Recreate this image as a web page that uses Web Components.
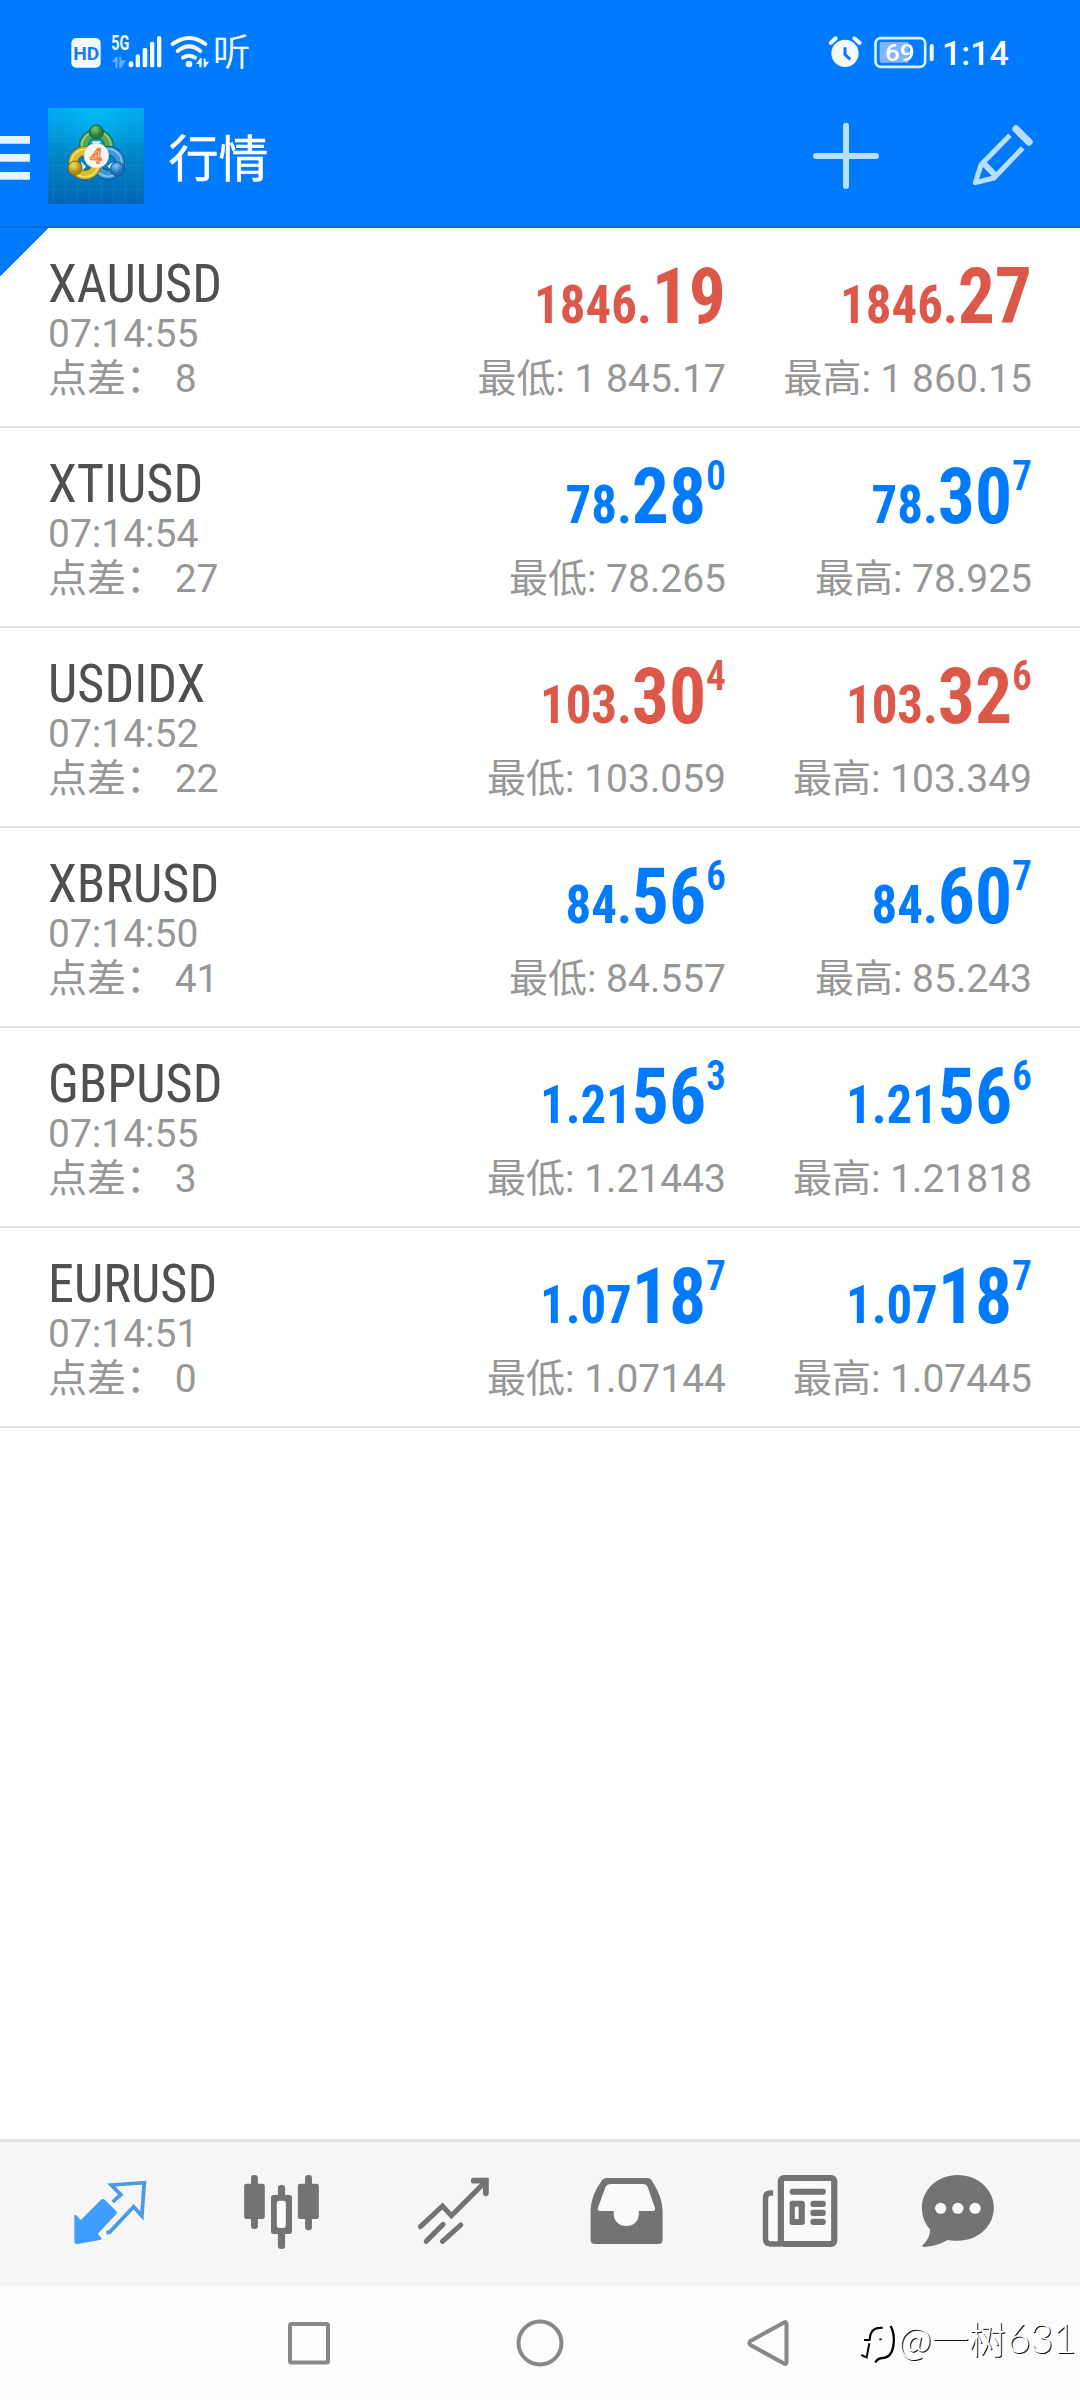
<!DOCTYPE html>
<html lang="zh-CN">
<head>
<meta charset="utf-8">
<title>行情</title>
<style>
html,body{margin:0;padding:0;background:#fff}
body{width:1080px;height:2400px;overflow:hidden;font-family:Roboto,"Noto Sans CJK SC",sans-serif}
</style>
</head>
<body>
<quotes-app></quotes-app>
<script>
const define = (name, html, after) => customElements.define(name, class extends HTMLElement {
  connectedCallback() {
    if (this.shadowRoot) return;
    const root = this.attachShadow({ mode: 'open' });
    root.innerHTML = typeof html === 'function' ? html(this) : html;
    if (after) after(root, this);
  }
});

define('status-bar', `
<style>
:host{display:flex;height:96px;color:#fff}
svg{display:block;height:96px;flex:none}
.t{font:300 37px/96px "Noto Sans CJK SC",sans-serif;margin-left:-1px;height:96px;position:relative;top:2px;-webkit-text-stroke:.6px #fff}
.sp{flex:1}
.clock{font:500 34px/96px Roboto,sans-serif;width:136px;position:relative;top:5px}
text{font-family:Roboto,sans-serif}
</style>
<svg width="214" viewBox="0 0 642 288" fill="#f3faff">
  <rect x="214" y="114" width="88" height="89" rx="15"/>
  <text x="220" y="179" font-size="57" font-weight="700" fill="#1c7bea" textLength="78" lengthAdjust="spacingAndGlyphs">HD</text>
  <text x="334" y="151" font-size="58" font-weight="700" textLength="54" lengthAdjust="spacingAndGlyphs">5G</text>
  <g opacity=".4"><path d="M336 186L347 171H353V203H346V186ZM358 171H364V181H378L365 203H358Z"/></g>
  <rect x="386" y="184" width="14" height="18" rx="6"/><rect x="407" y="163" width="13" height="39" rx="5"/><rect x="428" y="144" width="14" height="58" rx="5"/><rect x="450" y="125" width="13" height="77" rx="5"/><rect x="471" y="108" width="13" height="94" rx="5"/>
  <g fill="none" stroke="#f3faff" stroke-width="12" stroke-linecap="round"><path d="M518 132Q567 96 616 132M533 153Q567 125 601 153M549 173Q567 161 585 173"/></g>
  <circle cx="567" cy="192" r="10"/>
  <path d="M588 192L600 175H605V202H598V192ZM611 176H617V185H627L616 202H611Z"/>
</svg>
<span class="t">听</span><span class="sp"></span>
<svg width="124" viewBox="318 0 372 288" fill="#f3faff">
  <circle cx="375" cy="160" r="41"/>
  <path d="M375 142V164L391 178" fill="none" stroke="#0878f5" stroke-width="9"/>
  <path d="M332 129L347 115M403 115L419 129" stroke="#f3faff" stroke-width="12" stroke-linecap="round"/>
  <rect x="466.500" y="114.500" width="149" height="86" rx="16" fill="none" stroke="#d9edff" stroke-width="8"/>
  <rect x="479" y="126" width="87" height="62" rx="5" fill="#82b5ff"/>
  <text x="495" y="183" font-size="74" font-weight="500" textLength="88" lengthAdjust="spacingAndGlyphs" fill="#fff">69</text>
  <rect x="629" y="132" width="12" height="52" rx="6"/>
</svg>
<span class="clock" style="margin-left:-8px;margin-right:2px">1:14</span>`);

define('app-logo', `
<style>:host{display:block;width:96px;height:96px}svg{display:block}text{font-family:Roboto,sans-serif}</style>
<svg width="96" height="96" viewBox="144 324 288 288">
<defs>
<linearGradient id="s" x2="0" y2="1"><stop stop-color="#00a8ec"/><stop offset=".5" stop-color="#0085c6"/><stop offset="1" stop-color="#0065b4"/></linearGradient>
<radialGradient id="h" cx=".5" cy="0" r=".6"><stop stop-color="#00c8ff" stop-opacity=".7"/><stop offset="1" stop-color="#00b4ff" stop-opacity="0"/></radialGradient>
<radialGradient id="g" cx=".4" cy=".3"><stop stop-color="#7fc97a"/><stop offset="1" stop-color="#1f8038"/></radialGradient>
<radialGradient id="y" cx=".4" cy=".3"><stop stop-color="#f4e467"/><stop offset="1" stop-color="#b08d16"/></radialGradient>
<radialGradient id="b" cx=".4" cy=".3"><stop stop-color="#7cc8f4"/><stop offset="1" stop-color="#1c6fb8"/></radialGradient>
</defs>
<rect x="144" y="324" width="288" height="288" fill="url(#s)"/><rect x="144" y="324" width="288" height="288" fill="url(#h)"/>
<path d="M160 324V612M196 324V612M232 324V612M268 324V612M304 324V612M340 324V612M376 324V612M412 324V612M144 352H432M144 388H432M144 424H432M144 460H432M144 496H432M144 532H432M144 568H432" stroke="#4cc4ee" stroke-opacity=".2" stroke-width="2"/>
<circle cx="289" cy="439" r="38" fill="none" stroke="#17602f" stroke-width="29"/>
<circle cx="289" cy="439" r="38" fill="none" stroke="#57a659" stroke-width="24"/>
<circle cx="289" cy="439" r="44" fill="none" stroke="#a3d79a" stroke-width="4"/>
<circle cx="324" cy="488" r="36" fill="none" stroke="#0d4c87" stroke-width="29"/>
<circle cx="324" cy="488" r="36" fill="none" stroke="#3c97d6" stroke-width="24"/>
<circle cx="324" cy="488" r="41" fill="none" stroke="#8bcdf2" stroke-width="4"/>
<circle cx="255" cy="489" r="36" fill="none" stroke="#7d6c17" stroke-width="29"/>
<circle cx="255" cy="489" r="36" fill="none" stroke="#d8bd2c" stroke-width="24"/>
<circle cx="255" cy="489" r="41" fill="none" stroke="#f5e878" stroke-width="4"/>
<path d="M275 424H303L296 436H282ZM243 484L258 500L247 512ZM322 499L338 486L336 512Z" fill="#e4f2ea"/>
<circle cx="289" cy="396" r="21" fill="url(#g)" stroke="#17602f" stroke-width="3"/>
<circle cx="225" cy="504" r="21" fill="url(#y)" stroke="#806911" stroke-width="3"/>
<circle cx="352" cy="507" r="21" fill="url(#b)" stroke="#15558f" stroke-width="3"/>
<circle cx="289" cy="467" r="37" fill="#fbf7f0" stroke="#c9d3c4" stroke-width="2"/>
<text x="271" y="489" font-size="62" font-weight="500" fill="#fbe3cf" stroke="#ee8040" stroke-width="4" transform="rotate(5 289 467)">4</text>
</svg>`);

define('title-bar', `
<style>
:host{display:flex;height:132px;box-sizing:border-box;border-bottom:2px solid #0a68d8}
svg{display:block;height:130px;flex:none}
app-logo{margin-top:12px}
h1{margin:0 0 0 24.500px;flex:1;color:#fff;font:400 50px/119px "Noto Sans CJK SC",sans-serif;-webkit-text-stroke:.5px #fff}
</style>
<svg width="48" viewBox="0 288 144 390" fill="#e6f4ff"><path d="M0 408H90V431H0ZM0 462H90V485H0ZM0 516H90V539H0Z"/></svg>
<app-logo></app-logo>
<h1>行情</h1>
<svg width="280" viewBox="240 288 840 390" fill="none" stroke="#b8dfff">
  <path d="M378 377V558M288 468H468" stroke-width="18" stroke-linecap="round"/>
  <path d="M870 406L783 494L766 548L822 534L908 444" stroke-width="15" stroke-linejoin="round"/>
  <path d="M788 487L828 528" stroke-width="18"/>
  <path d="M888 387L927 426" stroke-width="22" stroke-linecap="round"/>
</svg>`);

define('price-tag', el => {
  const [a, b, c] = el.getAttribute('value').split('|');
  return `<style>
:host{display:block;text-align:right;font:700 78px/80px "Roboto Condensed",Roboto,sans-serif;font-stretch:75%;height:80px;white-space:nowrap;transform:scaleX(.942);transform-origin:100% 50%}
span{font-size:54px}sup{font-size:42px;line-height:0;vertical-align:33px;font-weight:600}
</style><span>${a}</span>${b}${c ? `<sup>${c}</sup>` : ''}`;
});

define('quote-row', el => {
  const g = n => el.getAttribute(n);
  return `<style>
:host{display:grid;grid-template-columns:1fr 360px 306px;height:200px;box-sizing:border-box;padding:0 48px;border-bottom:2px solid #e1e1e1;color:#979797;font-size:39px;line-height:44.500px;font-weight:400;white-space:nowrap}
.l{padding-top:27px}
.s{font:400 54px/57px "Roboto Condensed",Roboto,sans-serif;font-stretch:75%;color:#505050;transform:scaleX(.967);transform-origin:0 50%}
.c{padding-top:29px;text-align:right;color:${g('dir') === 'down' ? '#dc584a' : '#007aff'}}
.c div{margin-top:20px;color:#979797}
</style>
<div class="l"><div class="s">${g('symbol')}</div><div>${g('time')}</div><div>点差： ${g('spread')}</div></div>
<div class="c"><price-tag value="${g('bid')}"></price-tag><div>最低: ${g('low')}</div></div>
<div class="c"><price-tag value="${g('ask')}"></price-tag><div>最高: ${g('high')}</div></div>`;
});

define('tab-bar', `
<style>
:host{display:flex;height:147px;box-sizing:border-box;border-top:3px solid #e2e2e2;background:#f6f6f6;padding-left:24px}
svg{display:block;width:172px;height:144px}
</style>
<svg viewBox="69.700 66 499.500 432" preserveAspectRatio="none">
  <path d="M295 238Q300 235 305 240L338 274Q342 278 338 282L284 341L294 353Q297 358 290 360L225 372Q216 373 216 364V288Q217 281 223 288L235 300Z" fill="#409cff"/>
  <path d="M327 246L351 224L323 195L419 188L412 288L388 260L318 337H309" fill="none" stroke="#4b9ae8" stroke-width="11"/>
</svg>
<svg viewBox="569.200 66 499.500 432" preserveAspectRatio="none" fill="#737373">
  <rect x="709" y="191" width="60" height="106" rx="7"/><rect x="729" y="165" width="20" height="162" rx="9"/>
  <rect x="865" y="191" width="61" height="106" rx="7"/><rect x="886" y="165" width="20" height="166" rx="9"/>
  <rect x="787" y="225" width="61" height="117" rx="7"/><rect x="807" y="195" width="21" height="192" rx="9"/>
  <rect x="804" y="242" width="26" height="82" rx="8" fill="#fbfbfb"/>
</svg>
<svg viewBox="1068.700 66 499.500 432" preserveAspectRatio="none" fill="none" stroke="#737373" stroke-width="15" stroke-linecap="round">
  <path d="M1221 320L1285 258L1311 287L1411 184M1238 364L1287 313M1285 364L1338 315"/>
  <path d="M1376 182H1411V220" stroke-width="17"/>
</svg>
<svg viewBox="0 66 499.500 432" preserveAspectRatio="none">
  <path fill="#737373" d="M195 174H311Q321 174 326 184Q356 232 356 275V360Q356 372 343 372H160Q147 372 147 360V270Q148 228 178 184Q184 174 195 174Z"/>
  <path fill="#fafafa" d="M206 192H298Q309 192 313 202L334 264Q336 273 328 273H287V282C287 304 271 318 251 318S214 304 214 282V273H174Q166 272 168 264L190 202Q195 192 206 192Z"/>
</svg>
<svg viewBox="499.500 66 499.500 432" preserveAspectRatio="none">
  <path fill="none" stroke="#737373" stroke-width="16" d="M677 219H670Q655 219 655 233V358Q655 372 670 372H700"/>
  <rect x="664" y="228" width="27" height="135" rx="7" fill="#fafafa"/>
  <rect x="699.500" y="174" width="155" height="198" rx="9" fill="#fafafa" stroke="#737373" stroke-width="18"/>
  <g fill="#737373"><rect x="725" y="206" width="105" height="18" rx="8"/><rect x="725" y="242" width="44" height="73" rx="8"/><rect x="785" y="242" width="45" height="19" rx="9"/><rect x="785" y="269" width="45" height="19" rx="9"/><rect x="785" y="296" width="45" height="19" rx="9"/></g>
  <rect x="740" y="260" width="11" height="37" fill="#fafafa"/>
</svg>
<svg viewBox="999 66 499.500 432" preserveAspectRatio="none">
  <path fill="#737373" d="M1213 165C1272 165 1318 209 1318 263S1273 362 1213 362Q1199 363 1184 360Q1154 378 1115 381Q1108 380 1112 374Q1132 357 1133 329Q1109 301 1109 264C1109 209 1155 165 1213 165Z"/>
  <g fill="#fafafa"><circle cx="1163.500" cy="265" r="16.500"/><circle cx="1213.500" cy="265" r="16.500"/><circle cx="1263.500" cy="265" r="16.500"/></g>
</svg>`);

define('user-mark', `
<style>
:host{display:flex;align-items:flex-start;color:#fff;font:300 37px/50px "Noto Sans CJK SC",sans-serif;text-shadow:1px 1px .5px #111;white-space:nowrap}
svg{display:block;flex:none}
.n{font:300 41px/50px Lato,sans-serif;letter-spacing:-.9px;margin-left:1px}
</style>
<svg width="38" height="60" viewBox="30 9 114 180" fill="none" stroke="#000" stroke-width="6">
  <path d="M42 90H59Q60 56 86 54L98 53M58 100L50 142L34 135"/>
  <path d="M88 88H95" stroke-width="5"/>
  <path d="M122 48Q134 70 131 100Q127 142 98 144Q84 144 76 157" stroke-width="7"/></svg>
<span>@一树</span><span class="n">631</span>`);

define('system-nav', `
<style>
:host{display:flex;height:114px;background:#fcfcfc}
svg{display:block;width:860px;height:114px;flex:none}
user-mark{margin-top:27px}
</style>
<svg viewBox="0 0 860 114" fill="none" stroke="#888" stroke-width="4">
  <rect x="290" y="38" width="38" height="38.500" rx="1.500"/>
  <circle cx="540" cy="57" r="21.500"/>
  <path d="M750.500 55L784 36.500Q786.500 35 786.500 38V76Q786.500 79 784 77.500L750.500 59Q748 57 750.500 55Z"/>
</svg>
<user-mark></user-mark>`);

define('quotes-app', `
<style>
:host{display:flex;flex-direction:column;width:1080px;height:2400px;background:#fff;overflow:hidden}
header{background:#007aff;height:228px;flex:none}
main{flex:1;background:linear-gradient(135deg,#007aff 34px,transparent 34.600px) no-repeat}
</style>
<header><status-bar></status-bar><title-bar></title-bar></header>
<main>
<quote-row symbol="XAUUSD" time="07:14:55" spread="8" dir="down" bid="1846.|19" ask="1846.|27" low="1 845.17" high="1 860.15"></quote-row>
<quote-row symbol="XTIUSD" time="07:14:54" spread="27" bid="78.|28|0" ask="78.|30|7" low="78.265" high="78.925"></quote-row>
<quote-row symbol="USDIDX" time="07:14:52" spread="22" dir="down" bid="103.|30|4" ask="103.|32|6" low="103.059" high="103.349"></quote-row>
<quote-row symbol="XBRUSD" time="07:14:50" spread="41" bid="84.|56|6" ask="84.|60|7" low="84.557" high="85.243"></quote-row>
<quote-row symbol="GBPUSD" time="07:14:55" spread="3" bid="1.21|56|3" ask="1.21|56|6" low="1.21443" high="1.21818"></quote-row>
<quote-row symbol="EURUSD" time="07:14:51" spread="0" bid="1.07|18|7" ask="1.07|18|7" low="1.07144" high="1.07445"></quote-row>
</main>
<tab-bar></tab-bar>
<system-nav></system-nav>`);
</script>
</body>
</html>
